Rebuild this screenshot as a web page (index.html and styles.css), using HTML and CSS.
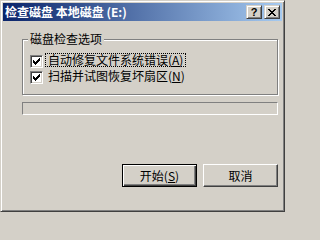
FILE: index.html
```html
<!DOCTYPE html>
<html lang="zh-CN">
<head>
<meta charset="utf-8">
<title>检查磁盘 本地磁盘 (E:)</title>
<link rel="stylesheet" href="styles.css">
</head>
<body>
<div class="window">
  <div class="titlebar">
    <span class="title">检查磁盘 本地磁盘 (E:)</span>
    <div class="caption-buttons">
      <span class="cap-btn help">?</span>
      <span class="cap-btn close">
        <svg width="8" height="7" viewBox="0 0 8 7" shape-rendering="crispEdges"><path d="M0 0h2v1h-2zM6 0h2v1h-2zM1 1h2v1h-2zM5 1h2v1h-2zM2 2h4v1h-4zM3 3h2v1h-2zM2 4h4v1h-4zM1 5h2v1h-2zM5 5h2v1h-2zM0 6h2v1h-2zM6 6h2v1h-2z" fill="#000"/></svg>
      </span>
    </div>
  </div>
  <div class="body">
    <div class="group">
      <span class="legend">磁盘检查选项</span>
      <div class="row">
        <span class="checkbox"><svg width="7" height="7" viewBox="0 0 7 7" shape-rendering="crispEdges"><path d="M6 0h1v1h-1zM5 1h2v1h-2zM0 2h1v1h-1zM4 2h3v1h-3zM0 3h2v1h-2zM3 3h3v1h-3zM0 4h5v1h-5zM1 5h3v1h-3zM2 6h1v1h-1z" fill="#000"/></svg></span>
        <span class="label focus">自动修复文件系统错误(<u>A</u>)</span>
      </div>
      <div class="row">
        <span class="checkbox"><svg width="7" height="7" viewBox="0 0 7 7" shape-rendering="crispEdges"><path d="M6 0h1v1h-1zM5 1h2v1h-2zM0 2h1v1h-1zM4 2h3v1h-3zM0 3h2v1h-2zM3 3h3v1h-3zM0 4h5v1h-5zM1 5h3v1h-3zM2 6h1v1h-1z" fill="#000"/></svg></span>
        <span class="label">扫描并试图恢复坏扇区(<u>N</u>)</span>
      </div>
    </div>
    <div class="progress"></div>
    <div class="buttons">
      <button class="btn default">开始(<u>S</u>)</button>
      <button class="btn">取消</button>
    </div>
  </div>
</div>
</body>
</html>
```
FILE: styles.css
```css
html, body {
  margin: 0;
  padding: 0;
  background: #D4D0C8;
}
body {
  font-family: "Noto Sans CJK SC", sans-serif;
  font-size: 12px;
  color: #000;
}
.window {
  width: 285px;
  height: 212px;
  box-sizing: border-box;
  border: 1px solid;
  border-color: #D4D0C8 #404040 #404040 #D4D0C8;
  box-shadow: inset 1px 1px 0 #fff, inset -1px -1px 0 #808080;
  padding: 2px;
  background: #D4D0C8;
  display: flex;
  flex-direction: column;
}
.titlebar {
  height: 18px;
  flex: none;
  display: flex;
  align-items: center;
  justify-content: space-between;
  background: linear-gradient(to right, #0A246A, #A6CAF0);
  padding-left: 2px;
}
.title {
  color: #fff;
  font-weight: 700;
  font-size: 12px;
  line-height: 12px;
  white-space: nowrap;
}
.caption-buttons {
  display: flex;
  gap: 2px;
  margin-right: 2px;
}
.cap-btn {
  width: 16px;
  height: 14px;
  box-sizing: border-box;
  background: #D4D0C8;
  border: 1px solid;
  border-color: #D4D0C8 #404040 #404040 #D4D0C8;
  box-shadow: inset 1px 1px 0 #fff, inset -1px -1px 0 #808080;
  display: flex;
  align-items: center;
  justify-content: center;
}
.help {
  font-family: "Liberation Sans", sans-serif;
  font-weight: 700;
  font-size: 11px;
  line-height: 11px;
  padding-top: 1px;
}
.close svg {
  display: block;
  margin-top: 1px;
}
.body {
  display: flex;
  flex-direction: column;
  padding-left: 19px;
}
.group {
  position: relative;
  margin-top: 18px;
  width: 256px;
  height: 56px;
  box-sizing: border-box;
  border: 1px solid #808080;
  box-shadow: 1px 1px 0 #fff, inset 1px 1px 0 #fff;
  padding: 13px 0 0 7px;
  display: flex;
  flex-direction: column;
}
.legend {
  position: absolute;
  top: -7px;
  left: 5px;
  padding: 0 2px;
  background: #D4D0C8;
  line-height: 12px;
  white-space: nowrap;
}
.row {
  height: 16px;
  display: flex;
  align-items: flex-start;
}
.checkbox {
  margin-top: 2px;
  width: 13px;
  height: 13px;
  box-sizing: border-box;
  border: 1px solid;
  border-color: #808080 #fff #fff #808080;
  box-shadow: inset 1px 1px 0 #404040, inset -1px -1px 0 #D4D0C8;
  background: #fff;
  padding: 2px;
  flex: none;
}
.checkbox svg {
  display: block;
}
.label {
  margin-left: 2px;
  border: 1px solid transparent;
  padding: 0 2px;
  line-height: 12px;
  height: 12px;
  white-space: nowrap;
}
.label.focus {
  border: 1px dotted #000;
}
u {
  text-underline-offset: 1px;
}
.progress {
  margin-top: 7px;
  width: 256px;
  height: 13px;
  box-sizing: border-box;
  border: 1px solid;
  border-color: #808080 #fff #fff #808080;
}
.buttons {
  margin-top: 49px;
  display: flex;
  justify-content: flex-end;
  gap: 6px;
  padding-right: 4px;
}
.btn {
  width: 75px;
  height: 23px;
  box-sizing: border-box;
  margin: 0;
  padding: 0;
  font-family: "Noto Sans CJK SC", sans-serif;
  font-size: 12px;
  line-height: 12px;
  color: #000;
  background: #D4D0C8;
  border: 1px solid;
  border-color: #fff #404040 #404040 #fff;
  box-shadow: inset -1px -1px 0 #808080;
  border-radius: 0;
}
.btn.default {
  border-color: #000;
  box-shadow: inset 1px 1px 0 #fff, inset -1px -1px 0 #404040, inset -2px -2px 0 #808080;
}
```
